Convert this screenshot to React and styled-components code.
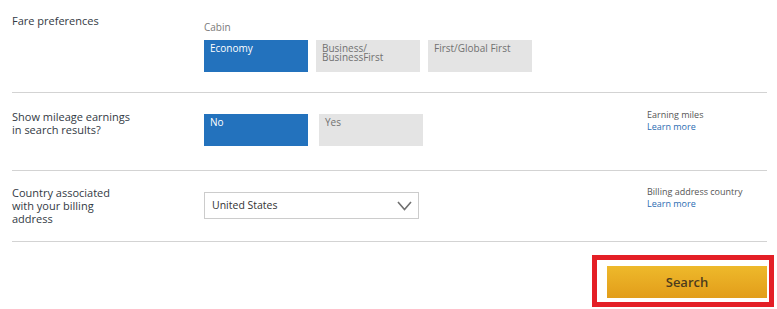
import React from "react";
import styled, { createGlobalStyle } from "styled-components";

const GlobalStyle = createGlobalStyle`
  body {
    margin: 0;
    background: #ffffff;
    font-family: "Open Sans", "Liberation Sans", sans-serif;
  }
`;

const Page = styled.div`
  width: 777px;
  height: 309px;
  overflow: hidden;
`;

const Rows = styled.div`
  width: 755px;
  margin-left: 12px;
`;

const Row = styled.div`
  box-sizing: border-box;
  display: grid;
  grid-template-columns: 192px 443px 1fr;
  align-items: start;
  height: ${(p) => p.h}px;
  padding-top: ${(p) => p.pt}px;
  border-bottom: 1px solid #d3d3d3;
`;

const Label = styled.div`
  margin-top: ${(p) => p.mt || 0}px;
  font-size: 11px;
  line-height: 13px;
  color: #333a44;
`;

const Control = styled.div`
  margin-top: ${(p) => p.mt || 0}px;
`;

const SubLabel = styled.div`
  font-size: 10px;
  line-height: 13px;
  color: #7a7a7a;
  margin-bottom: 6px;
`;

const Options = styled.div`
  display: flex;
  gap: ${(p) => p.gap}px;
`;

const Option = styled.div`
  box-sizing: border-box;
  width: 104px;
  height: 32px;
  padding: 4px 6px 0;
  font-size: 10px;
  line-height: 9px;
  background: ${(p) => (p.active ? "#2372bd" : "#e4e4e4")};
  color: ${(p) => (p.active ? "#ffffff" : "#717171")};
`;

const Info = styled.div`
  margin-top: ${(p) => p.mt || 0}px;
  font-size: 9px;
  line-height: 12px;
  color: #555555;
`;

const Link = styled.a`
  display: block;
  color: #2a6cb2;
  text-decoration: none;
`;

const Select = styled.div`
  box-sizing: border-box;
  width: 215px;
  height: 27px;
  border: 1px solid #cccccc;
  display: flex;
  align-items: center;
  justify-content: space-between;
  padding: 0 6px 0 7px;
  font-size: 10.5px;
  line-height: 13px;
  color: #333333;
`;

const Footer = styled.div`
  display: flex;
  justify-content: flex-end;
  margin-top: 13px;
  padding-right: 3px;
`;

const Highlight = styled.div`
  box-sizing: border-box;
  width: 182px;
  height: 52px;
  border: 5px solid #e41f26;
  padding: 6px 2px 4px 10px;
`;

const SearchButton = styled.button`
  width: 160px;
  height: 32px;
  border: none;
  padding: 0;
  background: linear-gradient(#eeb92b, #e29d1a);
  font-family: "Open Sans", "Liberation Sans", sans-serif;
  font-size: 13px;
  font-weight: 600;
  color: #4d3c1d;
`;

const Chevron = () => (
  <svg width="15" height="10" viewBox="0 0 15 10">
    <polyline points="1,1 7.5,8.5 14,1" fill="none" stroke="#707070" strokeWidth="1.6" />
  </svg>
);

export default function App() {
  return (
    <Page>
      <GlobalStyle />
      <Rows>
        <Row h={93} pt={14}>
          <Label>Fare preferences</Label>
          <Control mt={7}>
            <SubLabel>Cabin</SubLabel>
            <Options gap={8}>
              <Option active>Economy</Option>
              <Option>
                Business/
                <br />
                BusinessFirst
              </Option>
              <Option>First/Global First</Option>
            </Options>
          </Control>
        </Row>
        <Row h={78} pt={16}>
          <Label mt={1}>
            Show mileage earnings
            <br />
            in search results?
          </Label>
          <Control mt={5}>
            <Options gap={11}>
              <Option active>No</Option>
              <Option>Yes</Option>
            </Options>
          </Control>
          <Info>
            Earning miles
            <Link href="#">Learn more</Link>
          </Info>
        </Row>
        <Row h={71} pt={15}>
          <Label>
            Country associated
            <br />
            with your billing
            <br />
            address
          </Label>
          <Control mt={6}>
            <Select>
              <span>United States</span>
              <Chevron />
            </Select>
          </Control>
          <Info>
            Billing address country
            <Link href="#">Learn more</Link>
          </Info>
        </Row>
      </Rows>
      <Footer>
        <Highlight>
          <SearchButton>Search</SearchButton>
        </Highlight>
      </Footer>
    </Page>
  );
}
